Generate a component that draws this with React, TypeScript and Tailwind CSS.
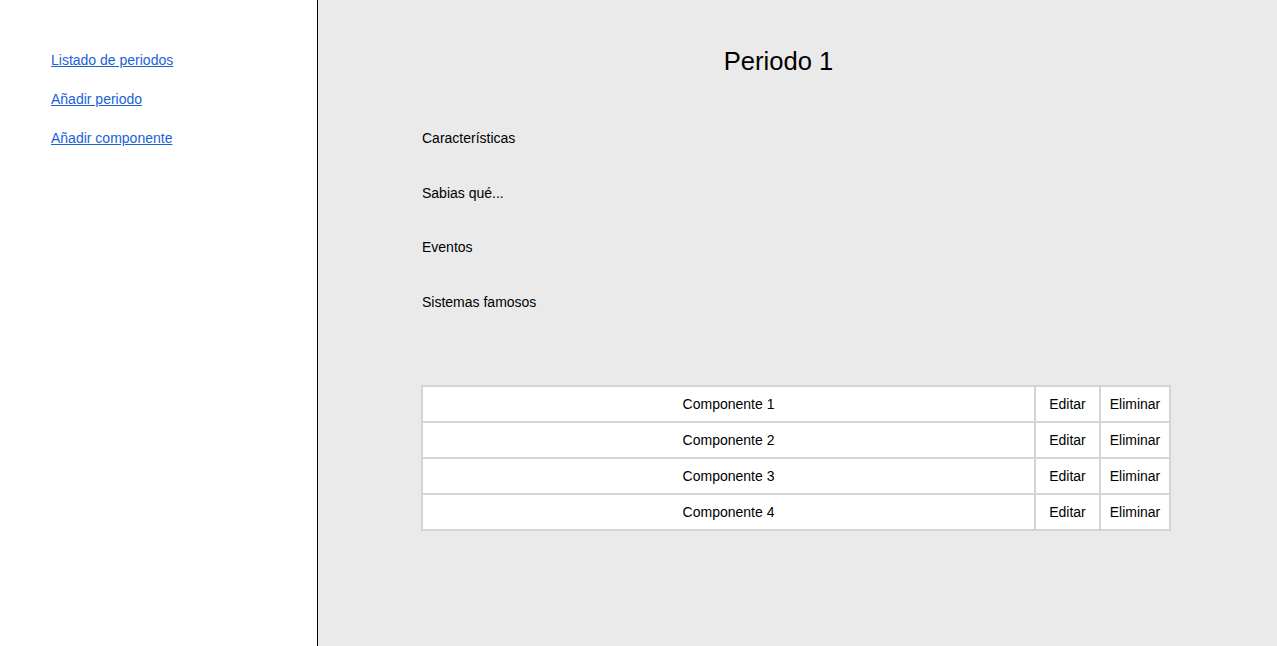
const links = ["Listado de periodos", "Añadir periodo", "Añadir componente"];
const sections = ["Características", "Sabias qué...", "Eventos", "Sistemas famosos"];
const componentes = ["Componente 1", "Componente 2", "Componente 3", "Componente 4"];

export default function App() {
  return (
    <div className="flex h-[646px] w-full font-['Liberation_Sans',Arial,sans-serif] text-[14px] text-black">
      {/* Sidebar */}
      <aside className="w-[318px] shrink-0 border-r border-black bg-white pl-[51px] pt-[52px]">
        <nav className="flex flex-col gap-[23px]">
          {links.map((link) => (
            <a key={link} href="#" className="leading-4 text-[#1a62d6] underline">
              {link}
            </a>
          ))}
        </nav>
      </aside>

      {/* Main content */}
      <main className="flex-1 bg-[#eaeaea] pt-[46px]">
        <h1 className="mr-[38px] text-center text-[25.6px] leading-[30px]">Periodo 1</h1>

        <div className="ml-[104px] mt-[54px] flex flex-col gap-[38.6px]">
          {sections.map((s) => (
            <p key={s} className="leading-4">
              {s}
            </p>
          ))}
        </div>

        <table className="ml-[103px] mt-[75px] w-[750px] border-collapse bg-white">
          <tbody>
            {componentes.map((c) => (
              <tr key={c}>
                <td className="border-2 border-[#d4d4d4] py-[9px] text-center leading-4">{c}</td>
                <td className="w-[65px] border-2 border-[#d4d4d4] py-[9px] text-center leading-4">Editar</td>
                <td className="w-[70px] border-2 border-[#d4d4d4] py-[9px] text-center leading-4">Eliminar</td>
              </tr>
            ))}
          </tbody>
        </table>
      </main>
    </div>
  );
}
